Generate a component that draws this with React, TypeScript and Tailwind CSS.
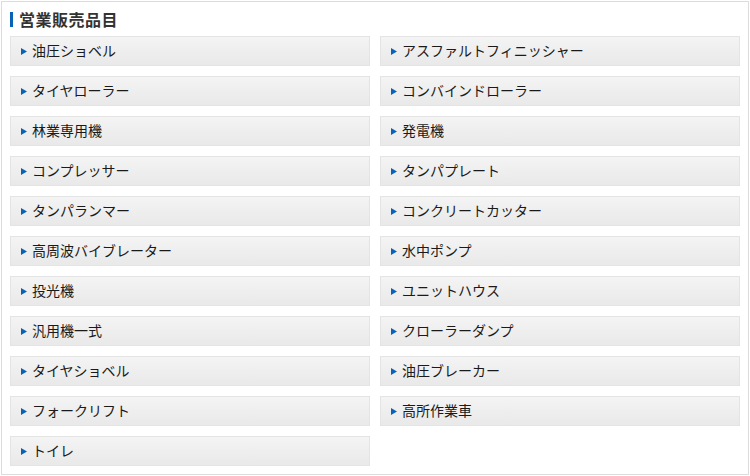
const left = [
  '油圧ショベル',
  'タイヤローラー',
  '林業専用機',
  'コンプレッサー',
  'タンパランマー',
  '高周波バイブレーター',
  '投光機',
  '汎用機一式',
  'タイヤショベル',
  'フォークリフト',
  'トイレ',
];

const right = [
  'アスファルトフィニッシャー',
  'コンバインドローラー',
  '発電機',
  'タンパプレート',
  'コンクリートカッター',
  '水中ポンプ',
  'ユニットハウス',
  'クローラーダンプ',
  '油圧ブレーカー',
  '高所作業車',
];

// interleave so the grid fills row by row
const items: string[] = [];
left.forEach((l, i) => {
  items.push(l);
  if (right[i]) items.push(right[i]);
});

const Item = ({ label }: { label: string }) => (
  <div className="flex h-[30px] items-center border border-[#e4e4e4] bg-gradient-to-b from-[#f4f4f4] to-[#e9e9e9] pl-[10px]">
    <svg width="6" height="7" viewBox="0 0 6 7" className="mr-[5px] shrink-0">
      <polygon points="0,0 6,3.5 0,7" fill="#0862b8" />
    </svg>
    <span className="pb-[2px] text-[14px] leading-none text-[#1a1a1a]">{label}</span>
  </div>
);

export default function App() {
  return (
    <div
      className="bg-white pt-px pl-px"
      style={{ fontFamily: '"Noto Sans CJK JP", "Liberation Sans", sans-serif' }}
    >
      <div className="h-[474px] w-[748px] border border-[#dcdcdc] px-[8px]">
        <div className="flex h-[34px] items-center">
          <span className="mr-[6px] h-[15px] w-[3px] bg-[#0862b8]"></span>
          <h2 className="pb-px text-[16px] font-bold leading-none tracking-[0.5px] text-[#333]">営業販売品目</h2>
        </div>
        <div className="grid grid-cols-2 gap-x-[10px] gap-y-[10px]">
          {items.map((label) => (
            <Item key={label} label={label} />
          ))}
        </div>
      </div>
    </div>
  );
}
